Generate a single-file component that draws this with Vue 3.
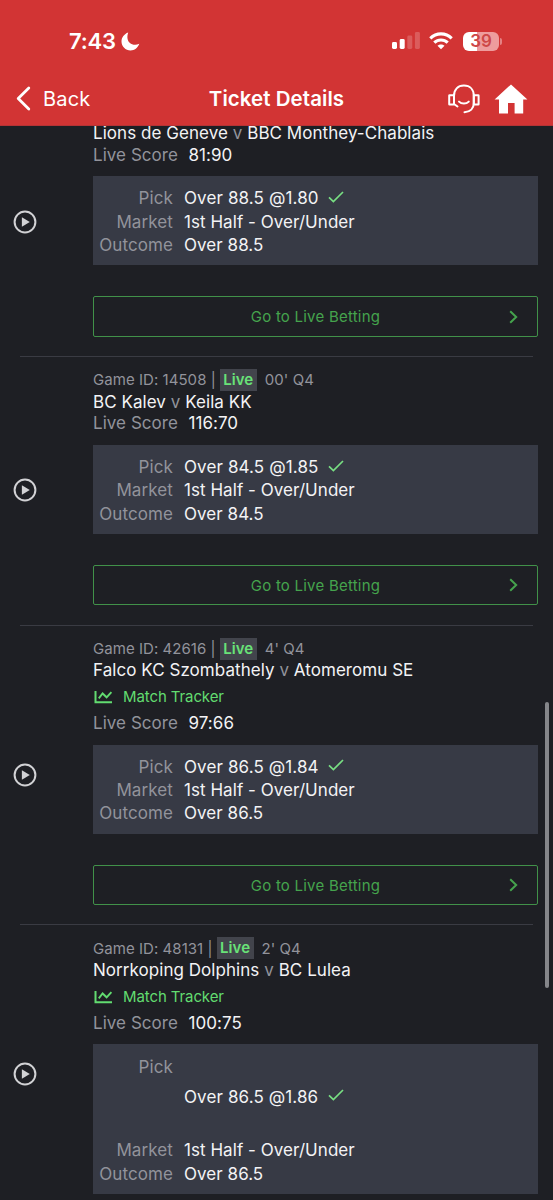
<script setup>
const games = [
  { home: 'Lions de Geneve', away: 'BBC Monthey-Chablais', score: '81:90', pick: 'Over 88.5 @1.80', outcome: 'Over 88.5' },
  { id: '14508', clock: "00' Q4", home: 'BC Kalev', away: 'Keila KK', score: '116:70', pick: 'Over 84.5 @1.85', outcome: 'Over 84.5' },
  { id: '42616', clock: "4' Q4", home: 'Falco KC Szombathely', away: 'Atomeromu SE', tracker: true, score: '97:66', pick: 'Over 86.5 @1.84', outcome: 'Over 86.5' },
  { id: '48131', clock: "2' Q4", home: 'Norrkoping Dolphins', away: 'BC Lulea', tracker: true, tall: true, score: '100:75', pick: 'Over 86.5 @1.86', outcome: 'Over 86.5' },
]
</script>

<template>
  <div class="screen">
    <header class="header">
      <div class="status">
        <div class="clock">
          <span class="time">7:43</span>
          <svg class="moon" width="19" height="19" viewBox="0 0 19 19"><path d="M7.200.5C5.600 5.200 6.500 8.700 8.700 10.700C11.200 13 14.600 13.500 18.300 11.800C16.700 16 13.500 18.500 9.600 18.500C4.500 18.500.5 14.500.5 9.600C.5 5.400 3.300 1.900 7.200.5Z" fill="#fff" /></svg>
        </div>
        <div class="indicators">
          <svg width="28" height="18" viewBox="0 0 28 18">
            <rect x="0" y="10" width="5" height="7" rx="1.400" fill="#fff" />
            <rect x="7.700" y="7" width="5" height="10" rx="1.400" fill="#fff" />
            <rect x="15.300" y="3.500" width="5" height="13.500" rx="1.400" fill="#fff" opacity=".2" />
            <rect x="22.900" y="0" width="5" height="17" rx="1.400" fill="#fff" opacity=".2" />
          </svg>
          <svg class="wifi" width="24" height="18" viewBox="0 0 24 18" fill="none" stroke="#fff" stroke-width="3.100">
            <path d="M1.300 6.400C7.300.4 16.700.4 22.700 6.400" />
            <path d="M5.300 10.700C9.100 7 14.900 7 18.700 10.700" />
            <path d="M12 17.300L8.500 13.800C10.500 11.900 13.500 11.900 15.500 13.800Z" fill="#fff" stroke="none" />
          </svg>
          <div class="battery"><span class="cell">39</span><i class="cap"></i></div>
        </div>
      </div>
      <nav class="nav">
        <a class="back">
          <svg width="15" height="25" viewBox="0 0 15 25"><path d="M12.800 2L2.200 12.500L12.800 23" fill="none" stroke="#fff" stroke-width="2.800" stroke-linecap="round" stroke-linejoin="round" /></svg>
          <span>Back</span>
        </a>
        <h1>Ticket Details</h1>
        <div class="actions">
          <svg width="32" height="30" viewBox="0 0 32 30" fill="none" stroke="#fff" stroke-width="2" stroke-linecap="round" stroke-linejoin="round">
            <rect x="1.200" y="11.200" width="4.800" height="9.400" rx=".4" />
            <rect x="25.800" y="11.200" width="4.800" height="9.400" rx=".4" />
            <path d="M6 12C6 5.500 9.800 1.600 15.900 1.600S25.800 5.500 25.800 12V19C25.800 24.500 22.200 28 16.500 28.300" />
            <path d="M6 20L9.500 22.500" />
            <path d="M11 17.600C13.600 20.200 18.200 20.200 20.800 17.600" />
          </svg>
          <svg width="34" height="30" viewBox="0 0 34 30"><path d="M17 .4L33.400 15.600H29.200V29.600H20.600V19H14V29.600H5V15.600H.6Z" fill="#fff" /></svg>
        </div>
      </nav>
    </header>

    <main class="list">
      <article v-for="g in games" :key="g.home" class="game" :class="{ tall: g.tall }">
        <div class="media">
          <svg width="24" height="24" viewBox="0 0 24 24">
            <circle cx="12" cy="12" r="10.400" fill="none" stroke="#d2d2d5" stroke-width="2" />
            <path d="M8.900 7.300L16.800 12L8.900 16.700Z" fill="#d2d2d5" />
          </svg>
        </div>
        <div class="body">
          <div class="meta">
            <template v-if="g.id"><span>Game ID: {{ g.id }} |</span><b class="live">Live</b><span>{{ g.clock }}</span></template>
          </div>
          <div class="teams">{{ g.home }} <span class="versus">v</span> {{ g.away }}</div>
          <div v-if="g.tracker" class="tracker">
            <svg width="19" height="14" viewBox="0 0 19 14" fill="none" stroke="#62dc70" stroke-width="2"><path d="M1.500 1V12.300H18" /><path d="M4.800 8.300L8.600 3.500L12.600 7.300L17.400 2.100" stroke-width="1.900" /></svg>
            <span>Match Tracker</span>
          </div>
          <div class="score"><span>Live Score</span><strong>{{ g.score }}</strong></div>
          <dl class="pick-box">
            <div class="row pick">
              <dt>Pick</dt>
              <dd>{{ g.pick }}<svg class="check" width="16" height="12" viewBox="0 0 16 12"><path d="M1 6.300L5.400 10.600L15 1" fill="none" stroke="#78df83" stroke-width="1.700" /></svg></dd>
            </div>
            <div class="row"><dt>Market</dt><dd>1st Half - Over/Under</dd></div>
            <div class="row"><dt>Outcome</dt><dd>{{ g.outcome }}</dd></div>
          </dl>
          <button class="go">
            <span>Go to Live Betting</span>
            <svg class="chevron" width="9" height="14" viewBox="0 0 9 14"><path d="M1.200 1.200L7.200 7L1.200 12.800" fill="none" stroke="#45a34d" stroke-width="2" /></svg>
          </button>
        </div>
      </article>
    </main>
    <div class="scrollbar"></div>
  </div>
</template>

<style>
body { background: #1e1f24; }
</style>

<style scoped>
* { box-sizing: border-box; }
.screen { position: relative; width: 553px; height: 1200px; overflow: hidden; background: #1e1f24; color: #f3f3f5; font-family: Inter, "Liberation Sans", sans-serif; font-size: 17px; display: flex; flex-direction: column; }
.header { height: 126px; flex: none; background: #d23434; color: #fff; border-bottom: 1px solid #b53335; }
.status { height: 72px; padding: 10px 51px 0 69px; display: flex; justify-content: space-between; align-items: center; }
.clock, .indicators { display: flex; align-items: center; }
.time { font-size: 22px; font-weight: 600; letter-spacing: -.2px; }
.moon { margin-left: 5px; }
.wifi { margin: 0 10px 0 9px; }
.battery { display: flex; align-items: center; }
.cell { width: 36px; height: 19px; border-radius: 6px; display: flex; align-items: center; justify-content: center; color: #ce4747; font-size: 17px; font-weight: 600; letter-spacing: -.2px; background: linear-gradient(90deg, #fff 39%, #ee9c9d 39%); }
.cap { width: 2px; height: 7px; margin-left: 1px; border-radius: 0 3px 3px 0; background: #e58183; }
.nav { height: 53px; padding: 0 16px; display: grid; grid-template-columns: 1fr auto 1fr; align-items: center; }
.back { display: flex; align-items: center; gap: 12px; font-size: 20px; letter-spacing: .2px; }
h1 { margin: 0; font-size: 20.500px; font-weight: 600; letter-spacing: .05px; }
.actions { display: flex; justify-content: flex-end; gap: 14px; margin-right: 9px; }
.list { flex: 1; min-height: 0; overflow: hidden; }
.game { display: flex; margin: 0 20px; border-top: 1px solid #3a3b43; padding-top: 12px; }
.game:first-child { margin-top: -38.600px; }
.media { width: 73px; flex: none; margin-left: -7px; margin-right: 7px; margin-top: -13px; display: flex; align-items: center; }
.tall .media { align-items: flex-start; padding-top: 138px; }
.body { flex: 1; margin-right: -5px; padding-bottom: 19.300px; }
.meta { height: 22px; display: flex; align-items: center; font-size: 15px; color: #92939b; letter-spacing: .05px; }
.live { height: 22px; line-height: 22px; margin: 0 8px 0 4px; padding: 0 3.500px; background: #42444c; color: #69e278; font-weight: 600; }
.teams { height: 21.500px; padding-top: .8px; line-height: 21.500px; white-space: nowrap; letter-spacing: .05px; }
.versus { color: #92939b; }
.tracker { height: 31.300px; display: flex; align-items: center; gap: 10px; color: #62dc70; font-size: 15px; padding-left: 1px; letter-spacing: -.1px; }
.score { height: 21.500px; display: flex; align-items: center; gap: 10.500px; color: #92939b; letter-spacing: .05px; }
.score strong { font-weight: 400; color: #f3f3f5; }
.pick-box { margin: 10.700px 0 31.300px; height: 89px; padding-top: 10.700px; background: #373a45; }
.tall .pick-box { height: 149.400px; }
.row { height: 23.300px; display: flex; }
dt { width: 80px; height: 23.300px; padding-top: .6px; line-height: 23.300px; text-align: right; color: #92939b; letter-spacing: .1px; }
dd { margin: 0 0 0 11px; display: flex; align-items: center; letter-spacing: .05px; }
.pick dd { letter-spacing: .12px; }
.tall .pick { height: 83.700px; }
.check { margin-left: 9.500px; margin-top: -3px; }
.go { position: relative; width: 100%; height: 40.300px; padding: .6px 0 0; display: flex; justify-content: center; align-items: center; background: none; border: 1.300px solid #419149; border-radius: 2px; color: #45a34d; font: 15px Inter, "Liberation Sans", sans-serif; letter-spacing: .23px; }
.chevron { position: absolute; right: 19px; }
.scrollbar { position: absolute; left: 545px; top: 702px; width: 4px; height: 286px; border-radius: 2px; background: #85868a; }
</style>
